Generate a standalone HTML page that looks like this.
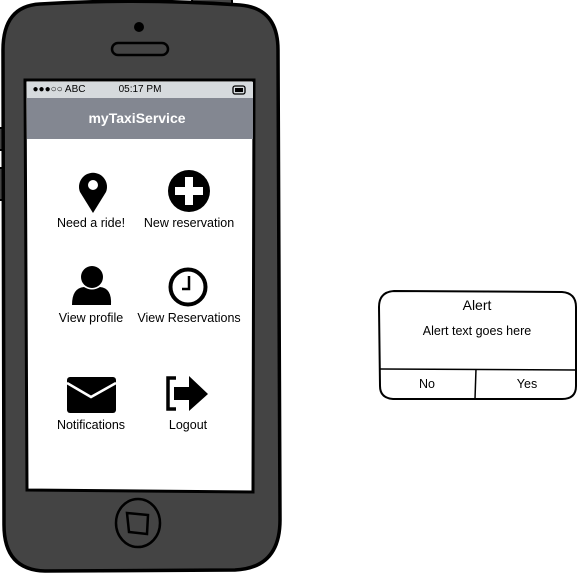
<!DOCTYPE html>
<html><head><style>
body{margin:0;width:577px;height:573px;background:#fff;position:relative;overflow:hidden;font-family:"Liberation Sans",sans-serif}
.t{position:absolute;font-size:12.5px;color:#000;white-space:nowrap;transform:translateX(-50%)}
</style></head><body>
<svg width="577" height="573" style="position:absolute;left:0;top:0">
<rect x="192" y="-2" width="40" height="8" rx="3" fill="#444" stroke="#000" stroke-width="2"/>
<rect x="-3" y="128" width="7" height="22" rx="2" fill="#444" stroke="#000" stroke-width="2"/>
<rect x="-3" y="168" width="7" height="32" rx="2" fill="#444" stroke="#000" stroke-width="2"/>
<path d="M40 4 Q140 -2 240 5 Q278 8 278 50 L280 520 Q280 568 235 570 L45 571 Q4 570 4 525 L3 50 Q3 6 40 4 Z" fill="#444" stroke="#000" stroke-width="3.5"/>
<circle cx="139" cy="27" r="5" fill="#000"/>
<rect x="112" y="43" width="56" height="12" rx="6" fill="none" stroke="#000" stroke-width="2.5"/>
<path d="M25 80 L254 80 L253 492 L27 490 Z" fill="#fff" stroke="#000" stroke-width="3"/>
<rect x="27" y="82" width="226" height="16" fill="#d6dadd"/>
<rect x="27" y="98" width="226" height="41" fill="#838791"/>
<rect x="233" y="86" width="12" height="8" rx="2" fill="none" stroke="#000" stroke-width="1.3"/>
<rect x="235" y="88" width="8" height="4" fill="#000"/>
<ellipse cx="138" cy="523" rx="22" ry="24" fill="none" stroke="#000" stroke-width="2.5"/>
<path d="M127 513 L148 515 L147 534 L129 532 Z" fill="none" stroke="#000" stroke-width="2.5"/>
<path d="M93 213 L80 192 A14 14 0 1 1 106 192 Z" fill="#000"/>
<circle cx="93" cy="185" r="5" fill="#fff"/>
<circle cx="189" cy="191" r="21" fill="#000"/>
<path d="M185 177 h8 v10 h10 v8 h-10 v10 h-8 v-10 h-10 v-8 h10 z" fill="#fff"/>
<circle cx="92" cy="277" r="11" fill="#000"/>
<path d="M72 305 Q72 288 84 287 Q92 292 100 287 Q112 288 111 305 Z" fill="#000"/>
<circle cx="188" cy="287" r="17.5" fill="none" stroke="#000" stroke-width="4"/>
<path d="M189 276 V289 H182" fill="none" stroke="#000" stroke-width="2.5"/>
<rect x="67" y="377" width="49" height="36" rx="3" fill="#000"/>
<path d="M67 383 L91 397 L116 383" fill="none" stroke="#fff" stroke-width="2.5"/>
<path d="M176 378 H168 V409 H176" fill="none" stroke="#000" stroke-width="3.5"/>
<path d="M174 387 H189 V376 L208 394 L189 411 V400 H174 Z" fill="#000"/>
<path d="M394 291 L562 292 Q576 293 576 307 L576 386 Q576 399 562 399 L393 399 Q380 398 380 386 L379 307 Q379 292 394 291 Z" fill="#fff" stroke="#000" stroke-width="2"/>
<line x1="379" y1="369" x2="576" y2="370" stroke="#000" stroke-width="1.5"/>
<line x1="476" y1="369" x2="475" y2="399" stroke="#000" stroke-width="1.5"/>
</svg>
<div class="t" style="left:59px;top:84px;font-size:10px">●●●○○ ABC</div>
<div class="t" style="left:140px;top:84px;font-size:10px">05:17 PM</div>
<div class="t" style="left:137px;top:110px;font-size:14px;font-weight:bold;color:#fff">myTaxiService</div>
<div class="t" style="left:91px;top:216px">Need a ride!</div>
<div class="t" style="left:189px;top:216px">New reservation</div>
<div class="t" style="left:91px;top:311px">View profile</div>
<div class="t" style="left:189px;top:311px">View Reservations</div>
<div class="t" style="left:91px;top:418px">Notifications</div>
<div class="t" style="left:188px;top:418px">Logout</div>
<div class="t" style="left:477px;top:297px;font-size:14px">Alert</div>
<div class="t" style="left:477px;top:324px">Alert text goes here</div>
<div class="t" style="left:427px;top:377px">No</div>
<div class="t" style="left:527px;top:377px">Yes</div>
</body></html>
